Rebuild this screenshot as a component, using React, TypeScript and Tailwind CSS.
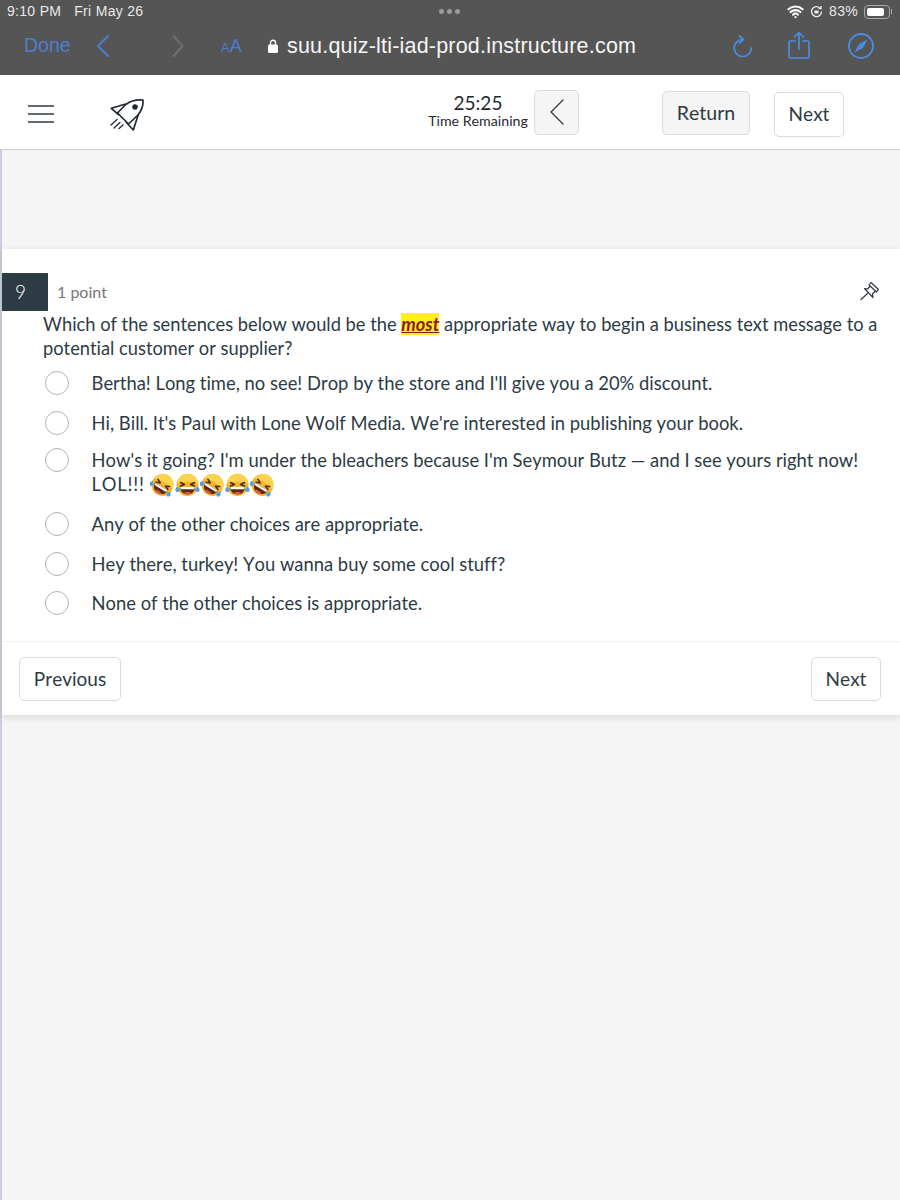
import { Wifi } from "lucide-react";

const choices: { text: string; tail?: string; pull?: string }[] = [
  { text: "Bertha! Long time, no see! Drop by the store and I'll give you a 20% discount." },
  { text: "Hi, Bill. It's Paul with Lone Wolf Media. We're interested in publishing your book." },
  {
    text: "How's it going? I'm under the bleachers because I'm Seymour Butz — and I see yours right now! ",
    tail: "LOL!!!",
    pull: "-mt-[3px]",
  },
  { text: "Any of the other choices are appropriate.", pull: "-mt-[1px]" },
  { text: "Hey there, turkey! You wanna buy some cool stuff?" },
  { text: "None of the other choices is appropriate.", pull: "-mt-[1px]" },
];

function LaughEmoji({ tilt }: { tilt?: boolean }) {
  return (
    <svg width="25" height="24" viewBox="0 0 25 24" className="inline-block align-[-6px]">
      <g transform={tilt ? "rotate(32 12.5 12)" : undefined}>
        <circle cx="12.5" cy="12" r="11" fill="#f5b42f" />
        <path d="M2 11a10.500 10.500 0 0 1 21 0c-3-3-18-3-21 0z" fill="#fbd34e" />
        <path d="M5.500 9.500l4 2-4 1.500M19.500 9.500l-4 2 4 1.500" stroke="#4a2c10" strokeWidth="1.500" fill="none" strokeLinejoin="round" strokeLinecap="round" />
        <path d="M5 14h15c-.2 4.500-3.500 7.500-7.500 7.500S5.200 18.500 5 14z" fill="#5d2a10" />
        <path d="M5.300 14h14.400l-.5 2.200H5.800z" fill="#fff" />
        <path d="M8.500 20c2-1.500 6-1.500 8 0-2.400 1.800-5.600 1.800-8 0z" fill="#e0584f" />
        <path d="M2.200 13.500c-1.700 1.800-2.400 3.800-1.200 5s3.200.4 4-1.800zM22.800 13.500c1.700 1.800 2.400 3.800 1.200 5s-3.200.4-4-1.800z" fill="#4f9fe8" />
      </g>
    </svg>
  );
}

function RocketIcon() {
  return (
    <svg width="36" height="36" viewBox="0 0 36 36" fill="none" stroke="#1f2a30" strokeWidth="1.700" strokeLinejoin="round">
      <path d="M34 2C28 1.500 22 2.500 16.700 6.500L8.500 15l11 11 9.500-9c4-5 5.500-9 5-15z" />
      <path d="M16.700 6L2.300 10.300 10 17M29.300 16.500L24.300 32 17 24" />
      <circle cx="26" cy="9" r="1.900" fill="#1f2a30" />
      <path d="M2 27l6-5.500M5 30l6-5.500M10 30.500l4-3.500" strokeLinecap="round" strokeWidth="1.300" />
    </svg>
  );
}

function PinIcon() {
  return (
    <svg width="24" height="24" viewBox="0 0 24 24" fill="none" stroke="#2d3b45" strokeWidth="1.200" strokeLinejoin="round">
      <path d="M13 2.500l7.500 7-2 2.500-7.500-7z" />
      <path d="M12.500 6L9.500 9 6.500 8.500 15 17.500l-.5-3.500 3-3" />
      <path d="M9.500 13.500L3 19.500" strokeLinecap="round" />
    </svg>
  );
}

export default function App() {
  return (
    <div className="flex h-[1200px] w-[900px] flex-col overflow-hidden bg-[#f5f5f5] font-['Lato',sans-serif] text-[#2d3b45] [font-kerning:none] [font-variant-ligatures:none]">
      {/* ios browser chrome */}
      <header className="h-[75px] shrink-0 bg-[#555555] font-['Liberation_Sans',sans-serif] [font-kerning:normal]">
        <div className="flex h-[23px] items-center justify-between pl-[7px] pr-[8px] text-[14px] tracking-[0.3px] text-[#e8e8e8]">
          <div className="flex w-[300px] gap-[13px]">
            <span>9:10 PM</span>
            <span>Fri May 26</span>
          </div>
          <div className="flex gap-[3px]">
            <span className="h-[5px] w-[5px] rounded-full bg-[#9a9a9a]" />
            <span className="h-[5px] w-[5px] rounded-full bg-[#9a9a9a]" />
            <span className="h-[5px] w-[5px] rounded-full bg-[#9a9a9a]" />
          </div>
          <div className="flex w-[300px] items-center justify-end gap-[6px]">
            <Wifi size={17} strokeWidth={3} className="text-white" />
            <svg width="13" height="13" viewBox="0 0 13 13" fill="none" stroke="#eee" strokeWidth="1.300">
              <path d="M11.500 6.500a5 5 0 1 1-1.500-3.500" />
              <path d="M8.500 3.500h2.500V1" />
              <rect x="4.500" y="5.500" width="4" height="3" fill="#eee" stroke="none" />
            </svg>
            <span>83%</span>
            <span className="flex items-center gap-[1px]">
              <span className="flex h-[14px] w-[26px] items-center rounded-[4px] border border-[#aaa] p-[2px]">
                <span className="h-full w-[85%] rounded-[2px] bg-white" />
              </span>
              <span className="h-[5px] w-[1px] bg-[#aaa]" />
            </span>
          </div>
        </div>
        <div className="flex h-[46px] items-center pl-[24px] pr-[26px]">
          <span className="w-[47px] text-[19.500px] text-[#4a7fd0]">Done</span>
          <svg width="14" height="24" viewBox="0 0 14 24" fill="none" stroke="#4a7fd0" strokeWidth="2" strokeLinecap="round" strokeLinejoin="round" className="ml-[25px]">
            <path d="M12 2L2 12l10 10" />
          </svg>
          <svg width="12" height="24" viewBox="0 0 12 24" fill="none" stroke="#6f6f6f" strokeWidth="2" strokeLinecap="round" strokeLinejoin="round" className="ml-[62px]">
            <path d="M1.500 2L10.500 12l-9 10" />
          </svg>
          <span className="ml-[37px] flex w-[23px] items-baseline text-[#4a7fd0]">
            <span className="text-[13px]">A</span>
            <span className="text-[18px]">A</span>
          </span>
          <svg width="10" height="14" viewBox="0 0 10 14" className="ml-[24px]">
            <path d="M2.500 6V3.800a2.500 2.500 0 0 1 5 0V6" fill="none" stroke="#fff" strokeWidth="1.400" />
            <rect x="0" y="5.500" width="10" height="8.500" rx="1.500" fill="#fff" />
          </svg>
          <span className="ml-[9px] text-[21.500px] tracking-[0.2px] text-[#f5f5f5]">suu.quiz-lti-iad-prod.instructure.com</span>
          <div className="ml-auto flex items-center">
            <svg width="20" height="23" viewBox="0 0 20 23" fill="none" stroke="#4a8de0" strokeWidth="1.700" strokeLinecap="round" strokeLinejoin="round">
              <path d="M9.500 4.500a8.500 8.500 0 1 0 8.700 8.500" />
              <path d="M6.500 1l4 3.500-4 3.500" />
            </svg>
            <svg width="22" height="28" viewBox="0 0 22 28" fill="none" stroke="#4a8de0" strokeWidth="1.700" strokeLinecap="round" strokeLinejoin="round" className="ml-[35px] -mt-[3px]">
              <path d="M7 10H2.500A1.500 1.500 0 0 0 1 11.500v14A1.500 1.500 0 0 0 2.500 27h17a1.500 1.500 0 0 0 1.500-1.500v-14a1.500 1.500 0 0 0-1.500-1.500H15" />
              <path d="M11 18V1.500M6.500 6L11 1.500 15.500 6" />
            </svg>
            <svg width="26" height="26" viewBox="0 0 26 26" className="ml-[38px] -mt-[1px]">
              <circle cx="13" cy="13" r="12" fill="none" stroke="#4a8de0" strokeWidth="1.800" />
              <path d="M19.500 6.500L15 15 6.500 19.500 11 11z" fill="#4a8de0" />
            </svg>
          </div>
        </div>
      </header>

      {/* quiz toolbar */}
      <nav className="flex h-[75px] shrink-0 items-center border-b border-[#c7cdd1] bg-white">
        <svg width="26" height="18" viewBox="0 0 26 18" stroke="#2d3b45" strokeWidth="1.500" className="ml-[28px] mt-[4px]">
          <path d="M0 1h26M0 9h26M0 17h26" />
        </svg>
        <div className="ml-[55px] mt-[8px]">
          <RocketIcon />
        </div>
        <div className="-mt-[4px] ml-[283px] flex w-[100px] flex-col items-center leading-none text-[#1f2a30]">
          <span className="text-[19px] leading-[21px]">25:25</span>
          <span className="text-[14.200px] leading-[16px]">Time Remaining</span>
        </div>
        <button className="ml-[6px] flex h-[45px] w-[45px] items-center justify-center rounded-[5px] border border-[#d8dcdf] bg-[#f5f5f5]">
          <svg width="14" height="26" viewBox="0 0 14 26" fill="none" stroke="#2d3b45" strokeWidth="1.300" strokeLinecap="round" strokeLinejoin="round">
            <path d="M13 1L1 13l12 12" />
          </svg>
        </button>
        <button className="ml-[83px] mt-[1px] h-[44px] w-[88px] rounded-[5px] border border-[#d8dcdf] bg-[#f5f5f5] text-[19.500px]">
          Return
        </button>
        <button className="ml-[24px] mt-[4px] h-[45px] w-[70px] rounded-[5px] border border-[#d8dcdf] bg-white text-[19px]">
          Next
        </button>
      </nav>

      {/* page body */}
      <main className="flex-1 border-l-[2px] border-[#c7d0dc] pt-[99px]">
        <section className="bg-white pt-[24px] shadow-[0_2px_8px_rgba(0,0,0,0.12)]">
          <div className="flex h-[38px] items-center">
            <span className="flex h-[38px] w-[46px] items-center bg-[#2d3b45] pl-[13px] text-[19px] font-light text-white">9</span>
            <span className="ml-[9px] text-[16px] text-[#777777]">1 point</span>
            <span className="ml-auto mr-[18px]">
              <PinIcon />
            </span>
          </div>
          <div className="pl-[41px] pr-[20px] pt-[1px] text-[18.300px] leading-[24px]">
            Which of the sentences below would be the{" "}
            <em className="bg-[#ffee22] font-bold text-[#8a1c1c] underline">most</em> appropriate way to begin a business text message to a potential customer or supplier?
          </div>
          <ul className="pb-[18px] pl-[43px] pr-[30px] pt-[3px]">
            {choices.map((c) => (
              <li key={c.text} className={`flex items-start gap-[22.500px] py-[8px] leading-[24px] ${c.pull ?? ""}`}>
                <span className="h-[24px] w-[24px] shrink-0 rounded-full border border-[#aeb5ba] bg-white" />
                <span className="text-[18.400px]">
                  {c.text}
                  {c.tail && (
                    <>
                      <span className="tracking-[0.8px]">{c.tail}</span>
                      <span className="ml-[5px] whitespace-nowrap">
                        <LaughEmoji tilt />
                        <LaughEmoji />
                        <LaughEmoji tilt />
                        <LaughEmoji />
                        <LaughEmoji tilt />
                      </span>
                    </>
                  )}
                </span>
              </li>
            ))}
          </ul>
          <div className="flex items-center justify-between border-t border-[#f0f0f0] pb-[14px] pl-[17px] pr-[19px] pt-[15px]">
            <button className="h-[44px] w-[102px] rounded-[5px] border border-[#d8dcdf] bg-white text-[19px]">Previous</button>
            <button className="h-[44px] w-[70px] rounded-[5px] border border-[#d8dcdf] bg-white text-[19px]">Next</button>
          </div>
        </section>
      </main>
    </div>
  );
}
